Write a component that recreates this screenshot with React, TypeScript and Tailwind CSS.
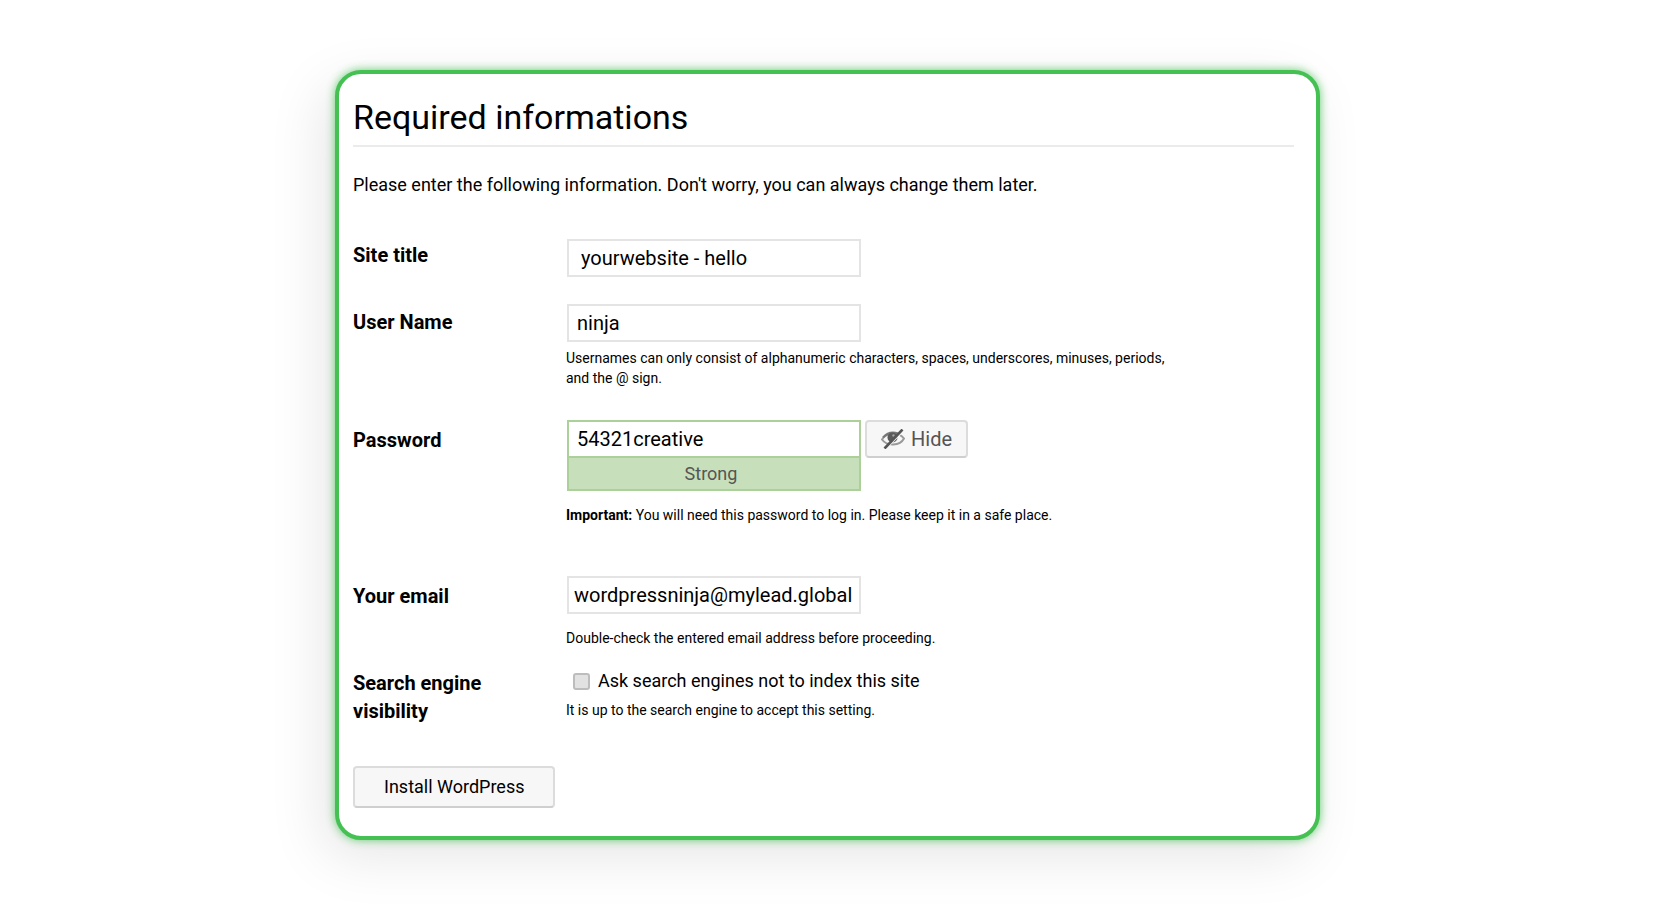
import { useState, type InputHTMLAttributes, type ReactNode } from "react";
import clsx from "clsx";

/** One form row: bold label on the left, control and hints on the right */
function Row({
  label,
  htmlFor,
  className,
  labelClassName,
  children,
}: {
  label: string;
  htmlFor: string;
  className?: string;
  labelClassName?: string;
  children: ReactNode;
}) {
  return (
    <div className={clsx("grid grid-cols-[213px_1fr]", className)}>
      <label htmlFor={htmlFor} className={clsx("pr-10 text-[20px] leading-7 font-bold", labelClassName)}>
        {label}
      </label>
      <div className="min-w-0">{children}</div>
    </div>
  );
}

function TextInput({ className, ...props }: InputHTMLAttributes<HTMLInputElement>) {
  return (
    <input
      type="text"
      className={clsx("ml-px block h-[38px] w-[294px] border-2 bg-white text-[20px] leading-6 outline-none", className)}
      {...props}
    />
  );
}

function Hint({ className, children }: { className?: string; children: ReactNode }) {
  return <p className={clsx("max-w-[620px] text-sm leading-5", className)}>{children}</p>;
}

function EyeSlash() {
  return (
    <svg viewBox="0 0 24 20" className="h-5 w-6" fill="none" aria-hidden="true">
      <path d="M1 10.5C5 3.5 18 2.5 23 9.5C19 17 6 17.5 1 10.5Z" stroke="#9a9a9a" strokeWidth="2" />
      <path d="M2 8.5C6 4 11 2.5 17 4.5" stroke="#777" strokeWidth="2" />
      <circle cx="11.5" cy="8.5" r="5" fill="#5a5a5a" />
      <circle cx="12.5" cy="6.5" r="1.2" fill="#a5a5a5" />
      <path d="M5.5 19L22.5 2" stroke="#f7f7f7" strokeWidth="1.5" />
      <path d="M3.5 19.5L21.5 0.5" stroke="#555" strokeWidth="2.6" />
    </svg>
  );
}

export default function App() {
  const [title, setTitle] = useState("yourwebsite - hello");
  const [user, setUser] = useState("ninja");
  const [password, setPassword] = useState("54321creative");
  const [visible, setVisible] = useState(true);
  const [email, setEmail] = useState("wordpressninja@mylead.global");
  const [noIndex, setNoIndex] = useState(false);

  return (
    <main className="min-h-screen bg-white px-4 py-[70px] font-[Roboto,sans-serif] text-black">
      <form
        onSubmit={(event) => event.preventDefault()}
        className="mx-auto max-w-[985px] rounded-[26px] border-4 border-[#45c153] bg-white pt-[23px] pr-[22px] pb-7 pl-[14px] shadow-[0_0_10px_rgba(69,193,83,0.8),-12px_16px_56px_rgba(0,0,0,0.1)]"
      >
        <h1 className="border-b-2 border-[#ebebeb] pb-2 text-[34px] leading-10">Required informations</h1>
        <p className="mt-6 text-lg leading-7">
          Please enter the following information. Don't worry, you can always change them later.
        </p>

        <Row label="Site title" htmlFor="title" className="mt-10" labelClassName="pt-[2px]">
          <TextInput id="title" value={title} onChange={(e) => setTitle(e.target.value)} className="border-[#e4e4e4] pl-3" />
        </Row>

        <Row label="User Name" htmlFor="user" className="mt-[27px]" labelClassName="pt-1">
          <TextInput id="user" value={user} onChange={(e) => setUser(e.target.value)} className="border-[#e4e4e4] pl-2" />
          <Hint className="mt-[6px]">
            Usernames can only consist of alphanumeric characters, spaces, underscores, minuses, periods, and the @ sign.
          </Hint>
        </Row>

        <Row label="Password" htmlFor="password" className="mt-8" labelClassName="pt-[6px]">
          <div className="flex items-start gap-1">
            <div>
              <TextInput
                id="password"
                type={visible ? "text" : "password"}
                value={password}
                onChange={(e) => setPassword(e.target.value)}
                className="border-[#abd09a] pl-2"
              />
              <div className="ml-px flex h-[33px] items-center justify-center border-2 border-t-0 border-[#abd09a] bg-[#c7e0bb] pr-[6px] text-lg text-[#555]">
                Strong
              </div>
            </div>
            <button
              type="button"
              onClick={() => setVisible(!visible)}
              className="flex h-[38px] items-center gap-[6px] rounded-[4px] border-2 border-[#dcdcdc] border-b-[#cfcfcf] bg-[#f7f7f7] px-[14px] text-[20px] leading-6 text-[#555]"
            >
              <EyeSlash />
              {visible ? "Hide" : "Show"}
            </button>
          </div>
          <Hint className="mt-[14px]">
            <strong>Important:</strong> You will need this password to log in. Please keep it in a safe place.
          </Hint>
        </Row>

        <Row label="Your email" htmlFor="email" className="mt-[51px]" labelClassName="pt-[6px]">
          <TextInput id="email" value={email} onChange={(e) => setEmail(e.target.value)} className="border-[#e4e4e4] pl-[5px]" />
          <Hint className="mt-[14px]">Double-check the entered email address before proceeding.</Hint>
        </Row>

        <Row label="Search engine visibility" htmlFor="noindex" className="mt-[21px]">
          <label className="flex items-center gap-2 pl-[7px] text-lg leading-6">
            <input
              id="noindex"
              type="checkbox"
              checked={noIndex}
              onChange={(e) => setNoIndex(e.target.checked)}
              className="size-[17px] appearance-none rounded-[3px] border-2 border-[#bdbdbd] bg-[#e2e2e2] checked:bg-[#45c153]"
            />
            Ask search engines not to index this site
          </label>
          <Hint className="mt-[7px]">It is up to the search engine to accept this setting.</Hint>
        </Row>

        <button
          type="submit"
          className="mt-[41px] h-[42px] rounded-[4px] border-2 border-[#dcdcdc] border-b-[#cfcfcf] bg-[#f7f7f7] px-[29px] text-lg leading-6"
        >
          Install WordPress
        </button>
      </form>
    </main>
  );
}
